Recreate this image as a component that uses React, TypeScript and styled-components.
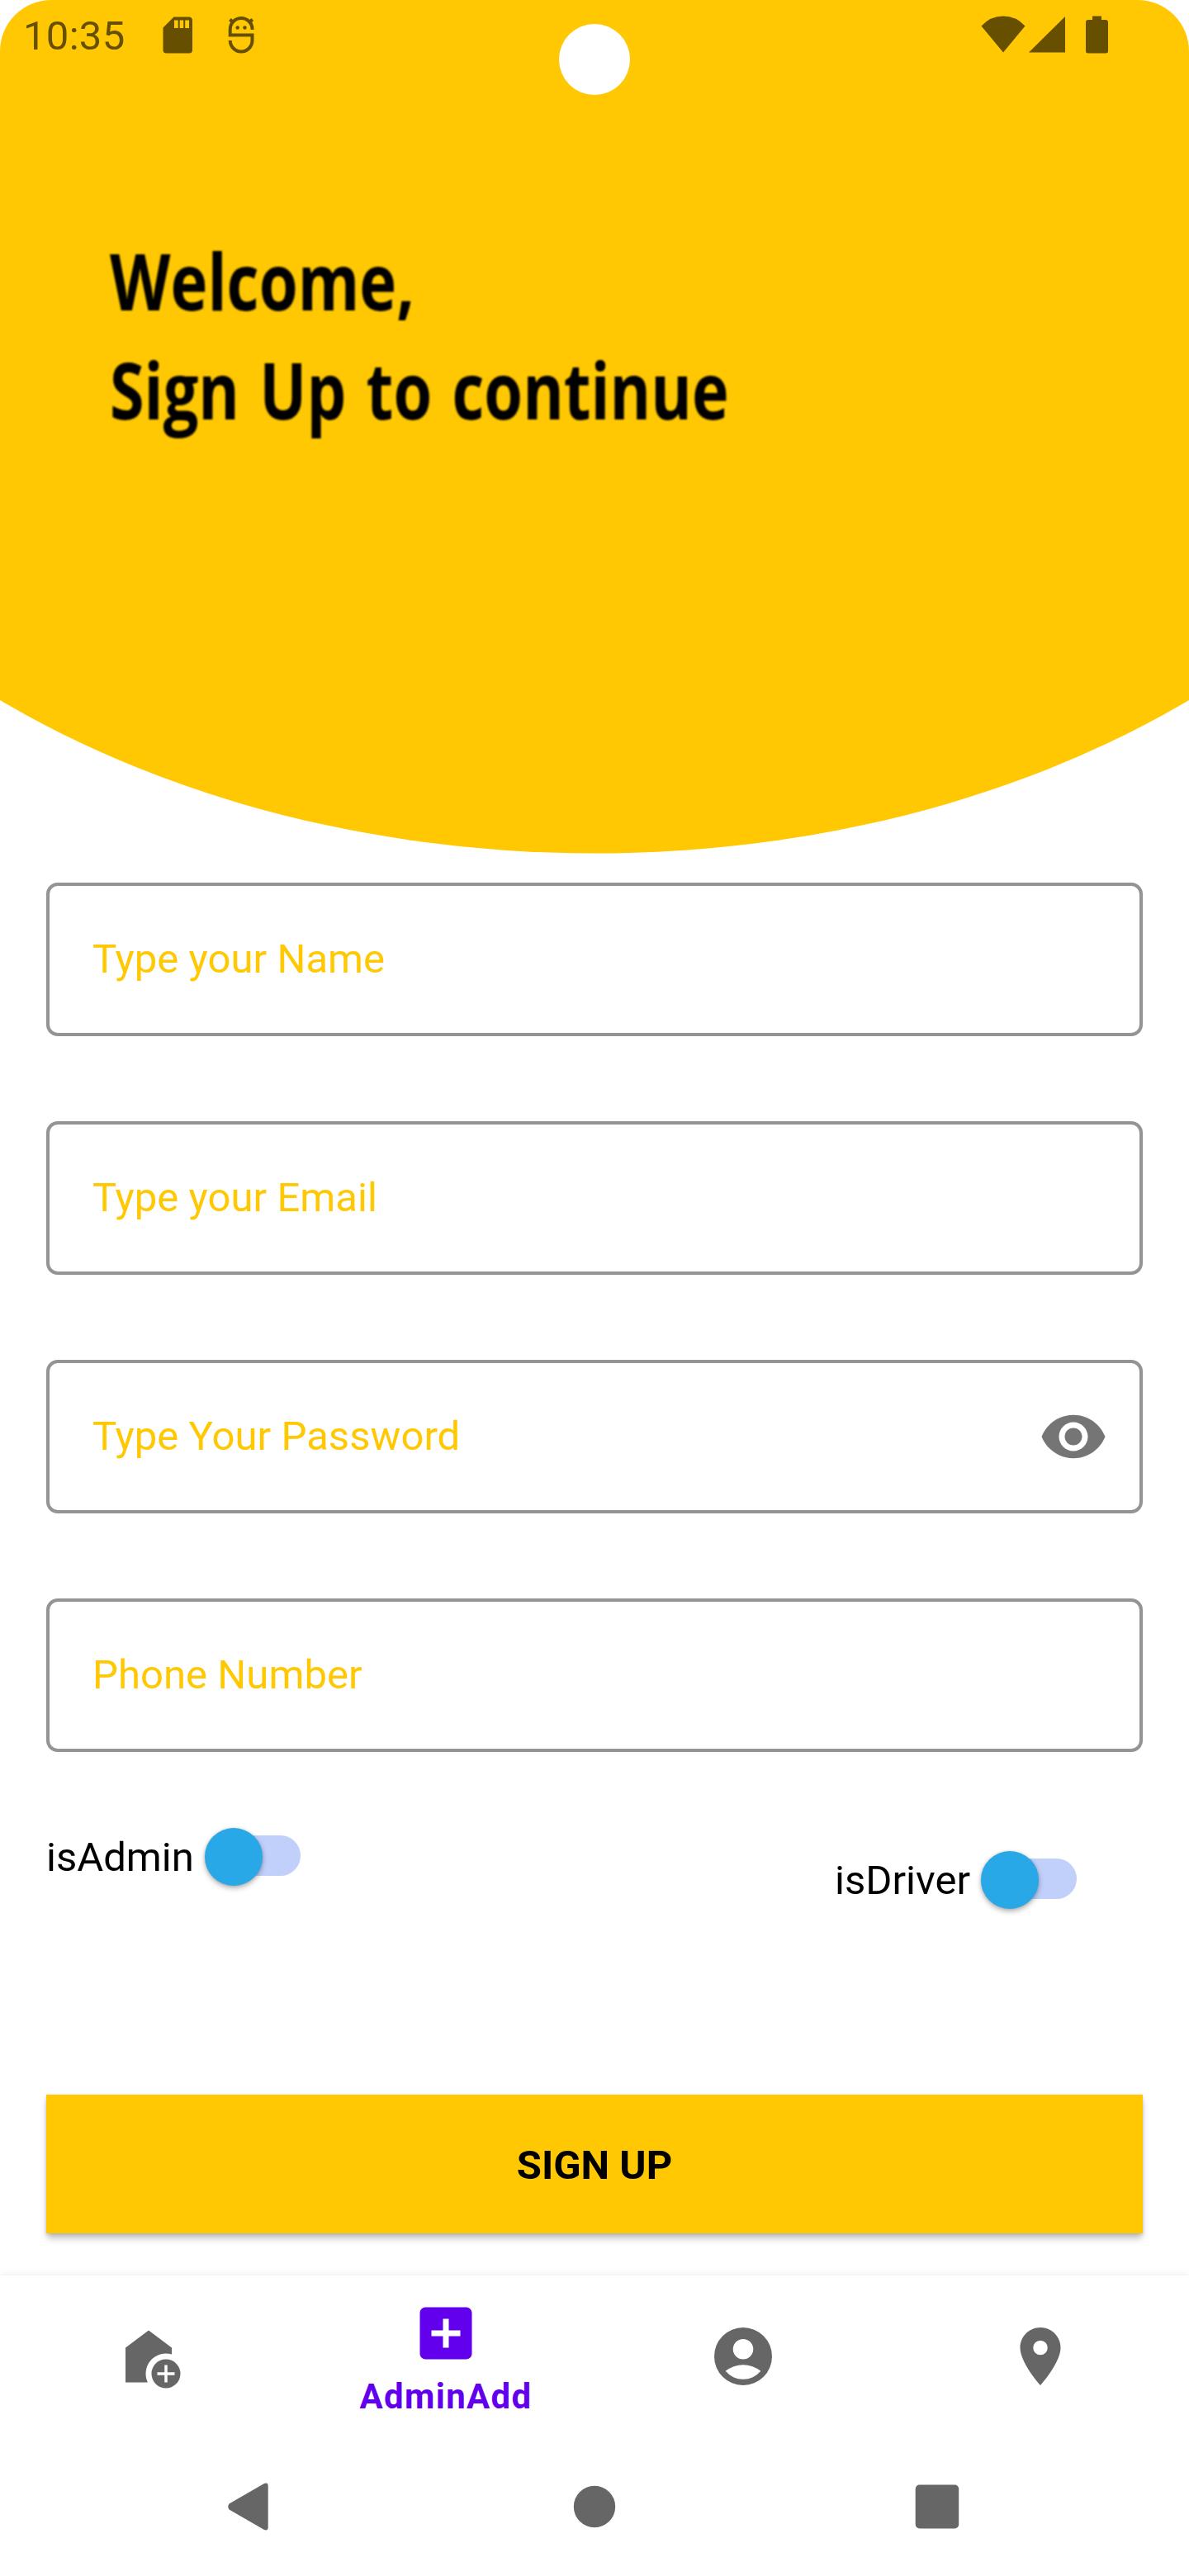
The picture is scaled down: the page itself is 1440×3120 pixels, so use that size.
import React from "react";
import styled, { createGlobalStyle } from "styled-components";

const YELLOW = "#ffc803";
const STATUS = "#665000";
const GREY = "#666666";
const PURPLE = "#6200ee";

const GlobalStyle = createGlobalStyle`
  *, *::before, *::after { box-sizing: border-box; }
  body { margin: 0; background: #ffffff; font-family: Roboto, sans-serif; }
`;

const Screen = styled.main`
  width: 1440px;
  height: 3120px;
  display: flex;
  flex-direction: column;
  background: #ffffff;
  overflow: hidden;
`;

const Hero = styled.header`
  position: relative;
  height: 1034px;
  flex: none;
  background: ${YELLOW};
  border-radius: 62px 62px 0 0;
  clip-path: ellipse(1120px 793px at 720px 240.5px);
`;

const StatusBar = styled.div`
  height: 88px;
  padding: 0 98px 0 28px;
  display: flex;
  align-items: center;
  justify-content: space-between;
  color: ${STATUS};
`;

const StatusGroup = styled.div`
  display: flex;
  align-items: center;
`;

const Clock = styled.span`
  width: 169px;
  font-size: 49px;
  line-height: 58px;
  letter-spacing: 0.3px;
`;

const Glyph = styled.svg<{ $gap?: number }>`
  display: block;
  flex: none;
  fill: currentColor;
  margin: 0 0 4px ${(p) => p.$gap ?? 0}px;
`;

const Camera = styled.div`
  position: absolute;
  left: 677px;
  top: 29px;
  width: 86px;
  height: 86px;
  border-radius: 50%;
  background: #ffffff;
`;

const Greeting = styled.h1`
  margin: 185px 0 0 133px;
  display: flex;
  flex-direction: column;
  align-items: flex-start;
  font-family: "Open Sans", "Noto Sans", sans-serif;
  font-size: 95px;
  font-weight: 700;
  line-height: 132px;
  word-spacing: 6px;
  color: #000000;
  filter: blur(0.8px);
`;

const GreetingLine = styled.span<{ $stretch: number }>`
  white-space: nowrap;
  transform: scaleX(${(p) => p.$stretch});
  transform-origin: 0 50%;
`;

const Form = styled.form`
  flex: none;
  height: 1722px;
  padding: 35px 56px 0;
  display: flex;
  flex-direction: column;
`;

const Fields = styled.div`
  display: flex;
  flex-direction: column;
  gap: 103px;
`;

const Field = styled.label`
  height: 186px;
  padding: 0 42px 0 52px;
  display: flex;
  align-items: center;
  justify-content: space-between;
  border: 4px solid #949494;
  border-radius: 14px;
  color: ${YELLOW};
  font-size: 49px;
  line-height: 58px;
  letter-spacing: 0.05px;
`;

const FieldIcon = styled.svg`
  display: block;
  width: 84px;
  height: 84px;
  margin-right: -4px;
  fill: #757575;
`;

const Switches = styled.div`
  margin-top: 84px;
  padding-right: 80px;
  display: flex;
  justify-content: space-between;
  align-items: flex-start;
`;

const SwitchRow = styled.div<{ $drop?: number }>`
  margin-top: ${(p) => p.$drop ?? 0}px;
  height: 88px;
  display: flex;
  align-items: center;
  font-size: 49px;
  line-height: 58px;
  color: #000000;
`;

const Track = styled.span`
  width: 101px;
  height: 49px;
  margin: 0 0 6px 28px;
  display: flex;
  align-items: center;
  border-radius: 25px;
  background: #c0d0fa;
`;

const Thumb = styled.span`
  flex: none;
  width: 70px;
  height: 70px;
  margin: 3px 0 0 -15px;
  border-radius: 50%;
  background: #28a8e6;
  box-shadow: 0 3px 6px rgba(0, 0, 0, 0.3), 0 0 3px rgba(0, 0, 0, 0.15);
`;

const SubmitButton = styled.button`
  margin: 215px 0 0;
  height: 168px;
  flex: none;
  border: 0;
  padding: 3px 0 0;
  background: ${YELLOW};
  color: #000000;
  font: 700 49px/58px Roboto, sans-serif;
  box-shadow: 0 7px 8px -1px rgba(0, 0, 0, 0.24), 0 1px 4px rgba(0, 0, 0, 0.14);
`;

const Tabs = styled.nav`
  flex: none;
  height: 196px;
  display: grid;
  grid-template-columns: repeat(4, 1fr);
  background: #ffffff;
  box-shadow: 0 0 10px rgba(0, 0, 0, 0.09);
`;

const Tab = styled.a<{ $active?: boolean }>`
  display: flex;
  flex-direction: column;
  align-items: center;
  justify-content: ${(p) => (p.$active ? "flex-start" : "center")};
  padding-top: ${(p) => (p.$active ? 28 : 0)}px;
  color: ${(p) => (p.$active ? PURPLE : GREY)};
`;

const TabIcon = styled.svg`
  display: block;
  width: 84px;
  height: 84px;
  fill: currentColor;
  fill-rule: evenodd;
`;

const TabLabel = styled.span`
  margin-top: 10px;
  font-size: 42px;
  line-height: 50px;
  font-weight: 700;
  letter-spacing: 1.3px;
`;

const SystemNav = styled.div`
  flex: none;
  height: 168px;
  padding: 0 258px;
  display: flex;
  align-items: center;
  justify-content: space-between;
  background: #ffffff;
  color: ${GREY};
`;

const SystemIcon = styled.svg`
  display: block;
  width: 84px;
  height: 84px;
  fill: currentColor;
`;

const tabs = [
  {
    name: "home",
    d: "M12 3L4 9v12h7.68A7 7 0 0 1 20 11.29V9zM18 13a5 5 0 1 0 0 10 5 5 0 0 0 0-10zm3 5.5h-2.5V21h-1v-2.5H15v-1h2.5V15h1v2.5H21z",
  },
  {
    name: "add",
    label: "AdminAdd",
    d: "M19 3H5c-1.11 0-2 .9-2 2v14c0 1.1.89 2 2 2h14c1.1 0 2-.9 2-2V5c0-1.1-.9-2-2-2zm-2 10h-4v4h-2v-4H7v-2h4V7h2v4h4v2z",
  },
  {
    name: "account",
    d: "M12 2a10 10 0 1 0 0 20 10 10 0 0 0 0-20zM12 6a3.5 3.5 0 1 1 0 7 3.5 3.5 0 0 1 0-7zM5.9 17.1A9.7 9.7 0 0 1 18.1 17.1A8 8 0 0 1 5.9 17.1z",
  },
  {
    name: "places",
    d: "M12 2C8.13 2 5 5.13 5 9c0 5.25 7 13 7 13s7-7.75 7-13c0-3.87-3.13-7-7-7zm0 9.5a2.5 2.5 0 1 1 0-5 2.5 2.5 0 0 1 0 5z",
  },
];

function Toggle({ label, drop }: { label: string; drop?: number }) {
  return (
    <SwitchRow $drop={drop}>
      {label}
      <Track>
        <Thumb />
      </Track>
    </SwitchRow>
  );
}

export default function App() {
  return (
    <>
      <GlobalStyle />
      <Screen>
        <Hero>
          <StatusBar>
            <StatusGroup>
              <Clock>10:35</Clock>
              <Glyph width="36" height="45" viewBox="0 0 36 45">
                <path
                  fillRule="evenodd"
                  d="M13.5 0.5H31.5Q36 0.5 36 5V40.500Q36 44.500 32 44.500H4.500Q0.500 44.500 0.500 40.500V13.500zM14 4.500V14H18.700V4.500zM20.700 4.500V14H25.200V4.500zM27.200 4.500V14H32V4.500z"
                />
              </Glyph>
              <Glyph $gap={43} width="32" height="45" viewBox="0 0 32 45">
                <g fill="none" stroke="currentColor" strokeWidth="4">
                  <path d="M29.600 16V15.500A13.400 13.400 0 0 0 2.700 15.500V22.500H29.500V29A13.400 13.400 0 0 1 2.700 29" />
                  <path d="M2.500 3.500L6 7M29.700 3.500L26.200 7" />
                </g>
                <circle cx="11.700" cy="13.500" r="2.200" />
                <circle cx="20.500" cy="13.500" r="2.200" />
              </Glyph>
            </StatusGroup>
            <StatusGroup>
              <Glyph width="54" height="46" viewBox="0 0 54 46">
                <path d="M27 44.500L0.500 12.500Q11.500 0.500 27 0.500T53.500 12.500z" />
              </Glyph>
              <Glyph $gap={4} width="44" height="46" viewBox="0 0 44 46">
                <path d="M44 1V44.500H0z" />
              </Glyph>
              <Glyph $gap={25} width="27" height="46" viewBox="0 0 27 46">
                <path d="M8 0.500H19V5H24Q27 5 27 8V43Q27 45.500 24 45.500H3Q0 45.500 0 43V8Q0 5 3 5H8z" />
              </Glyph>
            </StatusGroup>
          </StatusBar>
          <Camera />
          <Greeting>
            <GreetingLine $stretch={0.8}>Welcome,</GreetingLine>
            <GreetingLine $stretch={0.795}>Sign Up to continue</GreetingLine>
          </Greeting>
        </Hero>

        <Form>
          <Fields>
            <Field>Type your Name</Field>
            <Field>Type your Email</Field>
            <Field>
              Type Your Password
              <FieldIcon viewBox="0 0 24 24">
                <path d="M12 4.500C7 4.500 2.730 7.610 1 12c1.730 4.390 6 7.500 11 7.500s9.270-3.110 11-7.500c-1.730-4.390-6-7.500-11-7.500zM12 17c-2.760 0-5-2.240-5-5s2.240-5 5-5 5 2.240 5 5-2.240 5-5 5zm0-8c-1.660 0-3 1.340-3 3s1.340 3 3 3 3-1.340 3-3-1.340-3-3-3z" />
              </FieldIcon>
            </Field>
            <Field>Phone Number</Field>
          </Fields>
          <Switches>
            <Toggle label="isAdmin" />
            <Toggle label="isDriver" drop={28} />
          </Switches>
          <SubmitButton type="button">SIGN UP</SubmitButton>
        </Form>

        <Tabs>
          {tabs.map((tab) => (
            <Tab key={tab.name} $active={!!tab.label}>
              <TabIcon viewBox="0 0 24 24">
                <path d={tab.d} />
              </TabIcon>
              {tab.label && <TabLabel>{tab.label}</TabLabel>}
            </Tab>
          ))}
        </Tabs>

        <SystemNav>
          <SystemIcon viewBox="0 0 84 84">
            <path d="M19.500 38.500L61.500 14.300Q66.700 12 66.700 17V67Q66.700 72 61.500 69.700L19.500 45.500Q17 42 19.500 38.500z" />
          </SystemIcon>
          <SystemIcon viewBox="0 0 84 84">
            <circle cx="42" cy="42" r="25.200" />
          </SystemIcon>
          <SystemIcon viewBox="0 0 84 84">
            <rect x="10.700" y="15.500" width="52.500" height="53" rx="5" />
          </SystemIcon>
        </SystemNav>
      </Screen>
    </>
  );
}
